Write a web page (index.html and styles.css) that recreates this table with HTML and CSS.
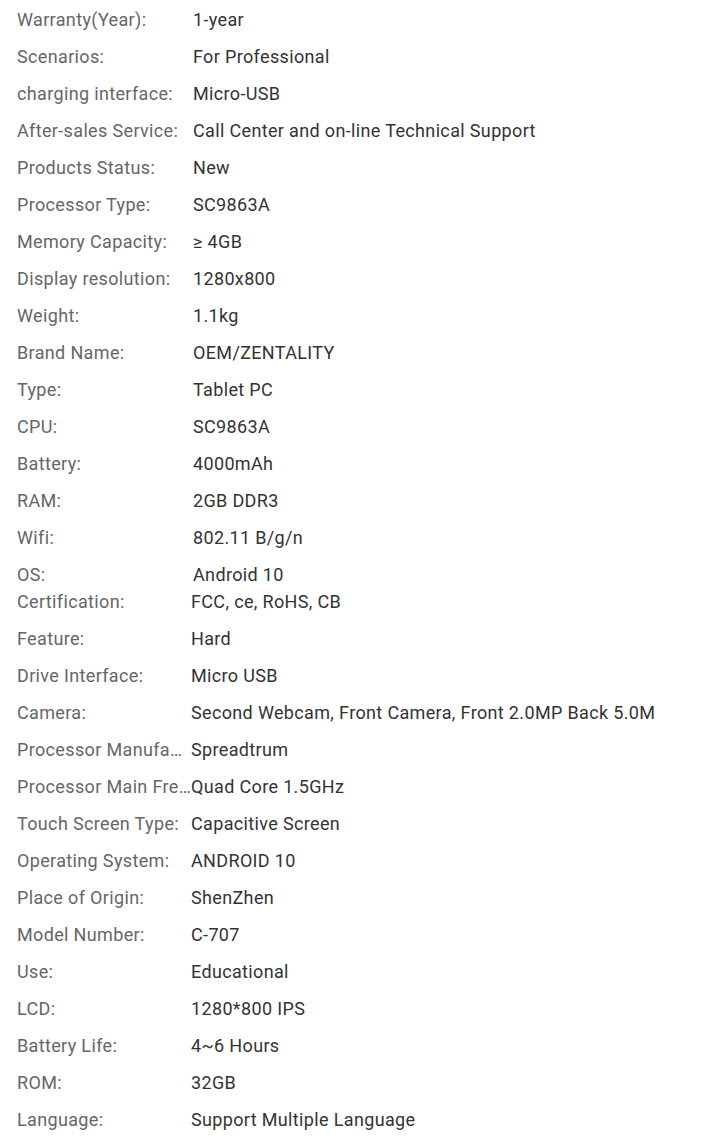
FILE: index.html
```html
<!DOCTYPE html>
<html>
<head>
<meta charset="utf-8">
<link rel="stylesheet" href="styles.css">
</head>
<body>
<div class="specs">
  <ul class="group group-a">
    <li class="row"><span class="label">Warranty(Year):</span><span class="value">1-year</span></li>
    <li class="row"><span class="label">Scenarios:</span><span class="value">For Professional</span></li>
    <li class="row"><span class="label">charging interface:</span><span class="value">Micro-USB</span></li>
    <li class="row"><span class="label">After-sales Service:</span><span class="value">Call Center and on-line Technical Support</span></li>
    <li class="row"><span class="label">Products Status:</span><span class="value">New</span></li>
    <li class="row"><span class="label">Processor Type:</span><span class="value">SC9863A</span></li>
    <li class="row"><span class="label">Memory Capacity:</span><span class="value">≥ 4GB</span></li>
    <li class="row"><span class="label">Display resolution:</span><span class="value">1280x800</span></li>
    <li class="row"><span class="label">Weight:</span><span class="value">1.1kg</span></li>
    <li class="row"><span class="label">Brand Name:</span><span class="value">OEM/ZENTALITY</span></li>
    <li class="row"><span class="label">Type:</span><span class="value">Tablet PC</span></li>
    <li class="row"><span class="label">CPU:</span><span class="value">SC9863A</span></li>
    <li class="row"><span class="label">Battery:</span><span class="value">4000mAh</span></li>
    <li class="row"><span class="label">RAM:</span><span class="value">2GB DDR3</span></li>
    <li class="row"><span class="label">Wifi:</span><span class="value">802.11 B/g/n</span></li>
    <li class="row"><span class="label">OS:</span><span class="value">Android 10</span></li>
  </ul>
  <ul class="group group-b">
    <li class="row"><span class="label">Certification:</span><span class="value">FCC, ce, RoHS, CB</span></li>
    <li class="row"><span class="label">Feature:</span><span class="value">Hard</span></li>
    <li class="row"><span class="label">Drive Interface:</span><span class="value">Micro USB</span></li>
    <li class="row"><span class="label">Camera:</span><span class="value">Second Webcam, Front Camera, Front 2.0MP Back 5.0M</span></li>
    <li class="row"><span class="label" title="Processor Manufacturer">Processor Manufa…</span><span class="value">Spreadtrum</span></li>
    <li class="row"><span class="label" title="Processor Main Frequency">Processor Main Fre…</span><span class="value">Quad Core 1.5GHz</span></li>
    <li class="row"><span class="label">Touch Screen Type:</span><span class="value">Capacitive Screen</span></li>
    <li class="row"><span class="label">Operating System:</span><span class="value">ANDROID 10</span></li>
    <li class="row"><span class="label">Place of Origin:</span><span class="value">ShenZhen</span></li>
    <li class="row"><span class="label">Model Number:</span><span class="value">C-707</span></li>
    <li class="row"><span class="label">Use:</span><span class="value">Educational</span></li>
    <li class="row"><span class="label">LCD:</span><span class="value">1280*800 IPS</span></li>
    <li class="row"><span class="label">Battery Life:</span><span class="value">4~6 Hours</span></li>
    <li class="row"><span class="label">ROM:</span><span class="value">32GB</span></li>
    <li class="row"><span class="label">Language:</span><span class="value">Support Multiple Language</span></li>
  </ul>
</div>
</body>
</html>
```
FILE: styles.css
```css
html, body {
  margin: 0;
  padding: 0;
  background: #ffffff;
}
body {
  font-family: Roboto, "Liberation Sans", sans-serif;
  font-size: 18px;
  letter-spacing: 0.35px;
}
.specs {
  padding: 1px 0 0 17px;
}
.group {
  list-style: none;
  margin: 0;
  padding: 0;
}
.row {
  display: flex;
  padding: 5px 0;
  line-height: 27px;
  white-space: nowrap;
}
.group-a .row:last-child {
  padding-bottom: 0;
}
.group-b .row:first-child {
  padding-top: 0;
}
.label {
  color: #666666;
  flex: none;
}
.group-a .label {
  width: 176px;
}
.group-b .label {
  width: 174px;
}
.value {
  color: #333333;
}
```
